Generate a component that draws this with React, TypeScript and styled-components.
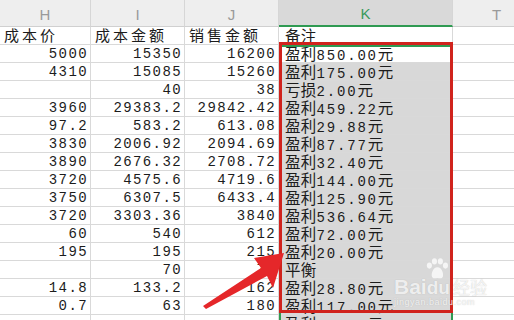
import React from 'react';
import styled, { createGlobalStyle } from 'styled-components';

type Row = [string, string, string, string];

const rows: Row[] = [
  ['成本价', '成本金额', '销售金额', '备注'],
  ['5000', '15350', '16200', '盈利850.00元'],
  ['4310', '15085', '15260', '盈利175.00元'],
  ['', '40', '38', '亏损2.00元'],
  ['3960', '29383.2', '29842.42', '盈利459.22元'],
  ['97.2', '583.2', '613.08', '盈利29.88元'],
  ['3830', '2006.92', '2094.69', '盈利87.77元'],
  ['3890', '2676.32', '2708.72', '盈利32.40元'],
  ['3720', '4575.6', '4719.6', '盈利144.00元'],
  ['3750', '6307.5', '6433.4', '盈利125.90元'],
  ['3720', '3303.36', '3840', '盈利536.64元'],
  ['60', '540', '612', '盈利72.00元'],
  ['195', '195', '215', '盈利20.00元'],
  ['', '70', '70', '平衡'],
  ['14.8', '133.2', '162', '盈利28.80元'],
  ['0.7', '63', '180', '盈利117.00元'],
  ['', '', '', '盈利10.00元'],
];

const letters = ['H', 'I', 'J', 'K', 'T'];

// split CJK runs so they get their own font and spacing
const mixed = (text: string, tight = false) =>
  text.split(/([\u4e00-\u9fff]+)/).map((part, i) =>
    /[\u4e00-\u9fff]/.test(part) ? (
      <Han key={i} $tight={tight}>
        {part}
      </Han>
    ) : (
      part
    )
  );

const App = () => {
  return (
    <>
      <GlobalStyle />
      <Sheet>
        {letters.map((l) => (
          <ColHead key={l} $active={l === 'K'}>
            {l}
          </ColHead>
        ))}
        {rows.map((row, r) => (
          <React.Fragment key={r}>
            {row.slice(0, 3).map((v, c) => (
              <Cell key={c} $right={r > 0}>
                {mixed(v)}
              </Cell>
            ))}
            <NoteCell $fill={r > 1}>{mixed(row[3], true)}</NoteCell>
            <Cell />
          </React.Fragment>
        ))}
        <SelectionFrame />
        <RedBox />
        <Arrow viewBox="0 0 514 320">
          <polygon points="284,253 254,258 261,268 203,306 206,309 267,276 273,288" fill="#e5272a" />
        </Arrow>
        <Watermark>
          <Paw viewBox="0 0 30 26">
            <ellipse cx="6" cy="9" rx="3" ry="3.6" />
            <ellipse cx="12" cy="4" rx="3" ry="3.6" />
            <ellipse cx="19" cy="4" rx="3" ry="3.6" />
            <ellipse cx="25" cy="9" rx="3" ry="3.6" />
            <path d="M15.5 11 C10 11 8 19 9 22 C10 25 13 24 15.5 23.5 C18 24 21 25 22 22 C23 19 21 11 15.5 11 Z" />
          </Paw>
          <Brand>
            Bai<Du>du</Du>
            <BrandHan>经验</BrandHan>
          </Brand>
          <Url>jingyan.baidu.com</Url>
        </Watermark>
      </Sheet>
    </>
  );
};

const GlobalStyle = createGlobalStyle`
  html, body {
    margin: 0;
    padding: 0;
    background: #ffffff;
    overflow: hidden;
  }
`;

const Sheet = styled.div`
  position: relative;
  display: grid;
  grid-template-columns: 91px 94px 94px 174px 88px;
  grid-template-rows: 27px;
  grid-auto-rows: 18px;
  width: 514px;
  height: 320px;
  overflow: hidden;
  font-family: "Liberation Mono", "Noto Sans CJK SC", monospace;
  font-size: 14px;
  letter-spacing: 1.4px;
  color: #1c1c1c;
`;

const ColHead = styled.div<{ $active?: boolean }>`
  display: flex;
  align-items: center;
  justify-content: center;
  box-sizing: border-box;
  padding-top: 2px;
  background: ${(p) => (p.$active ? '#d9d9d9' : '#eeeeee')};
  border-right: 1px solid #d6d6d6;
  border-bottom: ${(p) => (p.$active ? '2px solid #2f9a52' : '1px solid #d0d0d0')};
  font-family: "Liberation Sans", Arial, sans-serif;
  font-size: 15px;
  letter-spacing: 0;
  color: ${(p) => (p.$active ? '#3a9a5c' : '#9a9a9a')};
`;

const Cell = styled.div<{ $right?: boolean; $fill?: boolean }>`
  box-sizing: border-box;
  height: 18px;
  padding: 0 ${(p) => (p.$right ? '2px' : '0')} 0 ${(p) => (p.$right ? '0' : '4px')};
  background: ${(p) => (p.$fill ? '#d8d8d8' : '#ffffff')};
  border-right: 1px solid #d9d9d9;
  border-bottom: 1px solid #d9d9d9;
  line-height: 18px;
  text-align: ${(p) => (p.$right ? 'right' : 'left')};
  white-space: nowrap;
  overflow: hidden;
`;

const NoteCell = styled(Cell)`
  padding-left: 6px;
  letter-spacing: 1.8px;
`;

const Han = styled.span<{ $tight?: boolean }>`
  font-family: "Noto Sans CJK SC", sans-serif;
  font-size: ${(p) => (p.$tight ? '15.5px' : '15px')};
  line-height: 16px;
  letter-spacing: ${(p) => (p.$tight ? '0.3px' : '3px')};
  color: #1c1c1c;
`;

// selection of K2 downwards, mostly hidden under the red box
const SelectionFrame = styled.div`
  position: absolute;
  left: 279px;
  top: 45px;
  width: 174px;
  height: 300px;
  box-sizing: border-box;
  border: 2px solid #2f9a52;
  pointer-events: none;
`;

const RedBox = styled.div`
  position: absolute;
  left: 279px;
  top: 42px;
  width: 174px;
  height: 271px;
  box-sizing: border-box;
  border: 3px solid #d0231d;
  pointer-events: none;
`;

const Arrow = styled.svg`
  position: absolute;
  left: 0;
  top: 0;
  width: 514px;
  height: 320px;
  pointer-events: none;
`;

const Watermark = styled.div`
  position: absolute;
  left: 394px;
  top: 258px;
  width: 100px;
  display: flex;
  flex-direction: column;
  align-items: flex-start;
  color: rgba(255, 255, 255, 0.8);
  pointer-events: none;
`;

const Paw = styled.svg`
  width: 26px;
  height: 22px;
  margin-left: 30px;
  fill: rgba(255, 255, 255, 0.75);
`;

const Brand = styled.div`
  display: flex;
  align-items: baseline;
  margin-top: -6px;
  font-family: "Liberation Sans", Arial, sans-serif;
  font-size: 21px;
  font-weight: bold;
  letter-spacing: 0;
  text-shadow: 0 0 1px rgba(150, 150, 150, 0.6);
`;

const Du = styled.span`
  font-size: 19px;
`;

const BrandHan = styled.span`
  margin-left: 3px;
  font-family: "Noto Sans CJK SC", sans-serif;
  font-size: 17px;
  font-weight: normal;
`;

const Url = styled.div`
  margin-top: -2px;
  font-family: "Liberation Sans", Arial, sans-serif;
  font-size: 9px;
  letter-spacing: 0.5px;
  text-shadow: 0 0 1px rgba(150, 150, 150, 0.6);
`;

export default App;
